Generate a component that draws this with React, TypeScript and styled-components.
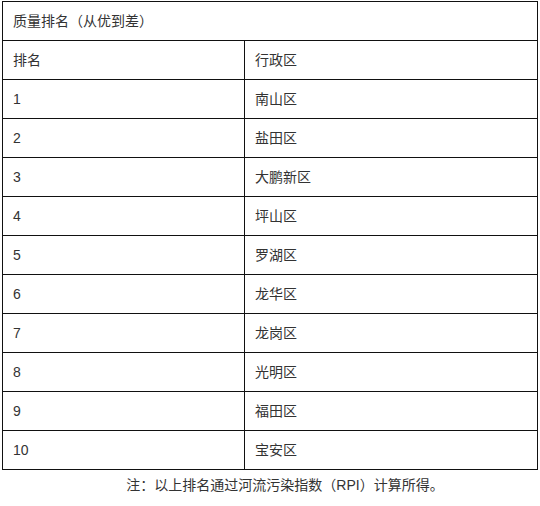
import styled, { createGlobalStyle } from 'styled-components'

const GlobalStyle = createGlobalStyle`
  body {
    margin: 0;
    background: #fff;
    font-family: "Liberation Sans", "Noto Sans CJK SC", sans-serif;
    color: #333;
  }
`

const RANKING = [
  '南山区',
  '盐田区',
  '大鹏新区',
  '坪山区',
  '罗湖区',
  '龙华区',
  '龙岗区',
  '光明区',
  '福田区',
  '宝安区'
]

const Page = styled.div`
  padding: 1px 0 0 2px;
  width: 540px;
  box-sizing: border-box;
`

const Table = styled.table`
  width: 535px;
  border-collapse: collapse;
  table-layout: fixed;
  font-size: 14px;
`

const Col = styled.col<{ $wide?: boolean }>`
  width: ${({ $wide }) => ($wide ? '293px' : '242px')};
`

const Cell = styled.td`
  border: 1px solid #111;
  padding: 9px 10px;
  line-height: 20px;
  white-space: nowrap;
`

const Note = styled.p`
  margin: 5px 0 0;
  padding-left: 28px;
  text-align: center;
  font-size: 14px;
  line-height: 20px;
`

const App = () => {
  return (
    <Page>
      <GlobalStyle />
      <Table>
        <colgroup>
          <Col />
          <Col $wide />
        </colgroup>
        <tbody>
          <tr>
            <Cell colSpan={2}>质量排名（从优到差）</Cell>
          </tr>
          <tr>
            <Cell>排名</Cell>
            <Cell>行政区</Cell>
          </tr>
          {RANKING.map((name, i) => (
            <tr key={name}>
              <Cell>{i + 1}</Cell>
              <Cell>{name}</Cell>
            </tr>
          ))}
        </tbody>
      </Table>
      <Note>注：以上排名通过河流污染指数（RPI）计算所得。</Note>
    </Page>
  )
}

export default App
